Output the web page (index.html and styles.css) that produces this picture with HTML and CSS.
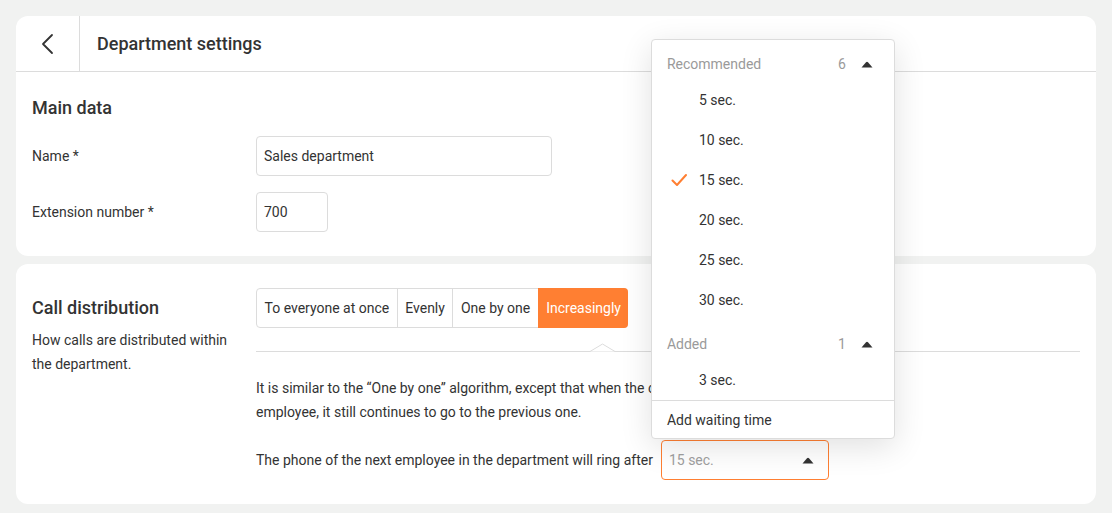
FILE: index.html
```html
<!DOCTYPE html>
<html lang="en">
<head>
<meta charset="utf-8">
<title>Department settings</title>
<link rel="stylesheet" href="styles.css">
</head>
<body>
<div class="card card-main">
  <div class="header">
    <div class="back">
      <svg width="24" height="24" viewBox="0 0 24 24"><path d="M16 3 L7 12 L16 21" fill="none" stroke="#333" stroke-width="1.8" stroke-linecap="round" stroke-linejoin="round"/></svg>
    </div>
    <div class="title">Department settings</div>
  </div>
  <div class="section">
    <h2 class="heading">Main data</h2>
    <div class="form">
      <div class="label">Name *</div>
      <div><div class="input input-name">Sales department</div></div>
      <div class="label">Extension number *</div>
      <div><div class="input input-ext">700</div></div>
    </div>
  </div>
</div>

<div class="card card-dist">
  <div class="dist-left">
    <h2 class="heading heading-dist">Call distribution</h2>
    <p class="desc">How calls are distributed within the department.</p>
  </div>
  <div class="dist-right">
    <div class="seg">
      <div class="seg-item">To everyone at once</div>
      <div class="seg-item">Evenly</div>
      <div class="seg-item">One by one</div>
      <div class="seg-item seg-active">Increasingly</div>
    </div>
    <div class="divider">
      <svg class="notch" width="25" height="9" viewBox="0 0 25 9"><polygon points="0,8.5 12.5,1 25,8.5" fill="#fff"/><polyline points="0,8.5 12.5,1 25,8.5" fill="none" stroke="#dcdcdc" stroke-width="1"/></svg>
    </div>
    <p class="explain">It is similar to the “One by one” algorithm, except that when the call passes to the next employee, it still continues to go to the previous one.</p>
    <div class="ring-row">
      <span>The phone of the next employee in the department will ring after</span>
      <div class="select-wrap">
        <div class="select">
          <span class="placeholder">15 sec.</span>
          <svg class="tri" width="12" height="7" viewBox="0 0 12 7"><path d="M0.5 6.5 L5 1.3 Q6 0.3 7 1.3 L11.5 6.5 Z" fill="#333"/></svg>
        </div>
        <div class="dropdown">
          <div class="group">
            <div class="group-head">
              <span class="group-name">Recommended</span>
              <span class="group-count">6</span>
              <svg class="tri" width="12" height="7" viewBox="0 0 12 7"><path d="M0.5 6.5 L5 1.3 Q6 0.3 7 1.3 L11.5 6.5 Z" fill="#333"/></svg>
            </div>
            <div class="opt">5 sec.</div>
            <div class="opt">10 sec.</div>
            <div class="opt opt-selected">
              <svg class="check" width="16" height="16" viewBox="0 0 16 16"><path d="M1.5 8.5 L6 13 L15 3" fill="none" stroke="#ff7f32" stroke-width="2" stroke-linecap="round" stroke-linejoin="round"/></svg>
              15 sec.
            </div>
            <div class="opt">20 sec.</div>
            <div class="opt">25 sec.</div>
            <div class="opt">30 sec.</div>
          </div>
          <div class="group group-second">
            <div class="group-head">
              <span class="group-name">Added</span>
              <span class="group-count">1</span>
              <svg class="tri" width="12" height="7" viewBox="0 0 12 7"><path d="M0.5 6.5 L5 1.3 Q6 0.3 7 1.3 L11.5 6.5 Z" fill="#333"/></svg>
            </div>
            <div class="opt">3 sec.</div>
          </div>
          <div class="dd-footer">Add waiting time</div>
        </div>
      </div>
    </div>
  </div>
</div>
</body>
</html>
```

FILE: styles.css
```css
* { box-sizing: border-box; }

body {
  margin: 0;
  padding: 16px;
  background: #f1f2f1;
  font-family: Roboto, "Liberation Sans", sans-serif;
  font-size: 14px;
  color: #333;
}

.card {
  background: #fff;
  border-radius: 12px;
  width: 1080px;
}

.card-main { height: 240px; }

.header {
  display: flex;
  height: 56px;
  border-bottom: 1px solid #dcdcdc;
}

.back {
  width: 64px;
  border-right: 1px solid #dcdcdc;
  display: flex;
  align-items: center;
  justify-content: center;
}

.title {
  display: flex;
  align-items: center;
  padding-left: 17px;
  font-size: 18px;
  font-weight: 500;
}

.section { padding: 25px 16px 0; }

.heading {
  margin: 0;
  font-size: 18px;
  font-weight: 500;
  line-height: 22px;
}

.form {
  margin-top: 17px;
  display: grid;
  grid-template-columns: 224px 1fr;
  row-gap: 16px;
  align-items: center;
}

.input {
  height: 40px;
  border: 1px solid #dcdcdc;
  border-radius: 4px;
  display: flex;
  align-items: center;
  padding: 0 7px;
}

.input-name { width: 296px; }
.input-ext { width: 72px; }

.card-dist {
  margin-top: 8px;
  height: 240px;
  display: flex;
  padding: 24px 16px;
}

.dist-left { width: 224px; }

.heading-dist {
  margin-top: 8px;
  line-height: 24px;
}

.desc {
  margin: 8px 0 0;
  line-height: 24px;
  width: 210px;
}

.dist-right { flex: 1; }

.seg {
  display: inline-flex;
  height: 40px;
  border: 1px solid #dcdcdc;
  border-radius: 4px;
}

.seg-item {
  display: flex;
  align-items: center;
  padding: 0 7.5px;
  border-left: 1px solid #dcdcdc;
}

.seg-item:first-child { border-left: none; }

.seg-active {
  background: #ff7f32;
  color: #fff;
  border-left-color: #ff7f32;
  margin: -1px -1px -1px 0;
  border-radius: 0 4px 4px 0;
}

.divider {
  position: relative;
  margin-top: 23px;
  border-bottom: 1px solid #dcdcdc;
}

.notch {
  position: absolute;
  left: 334px;
  top: -8px;
}

.explain {
  margin: 24px 0 0;
  width: 575px;
  line-height: 24px;
}

.ring-row {
  margin-top: 16px;
  display: flex;
  align-items: center;
  gap: 8px;
}

.select-wrap { position: relative; }

.select {
  width: 168px;
  height: 40px;
  border: 1px solid #ff7f32;
  border-radius: 4px;
  display: flex;
  align-items: center;
  justify-content: space-between;
  padding: 0 14px 0 7px;
}

.placeholder { color: #a0a0a0; }

.tri { display: block; }

.dropdown {
  position: absolute;
  left: -10px;
  bottom: calc(100% + 1px);
  width: 244px;
  background: #fff;
  border: 1px solid #dcdcdc;
  border-radius: 4px;
  box-shadow: 0 8px 32px rgba(0, 0, 0, 0.12);
  padding-top: 8px;
  z-index: 10;
}

.group-second { margin-top: 8px; }

.group-head {
  height: 32px;
  display: flex;
  align-items: center;
  padding: 0 21px 0 15px;
}

.group-name {
  flex: 1;
  color: #9a9a9a;
}

.group-count {
  color: #9a9a9a;
  margin-right: 15px;
}

.opt {
  position: relative;
  height: 40px;
  display: flex;
  align-items: center;
  padding-left: 47px;
}

.check {
  position: absolute;
  left: 19px;
  top: 12px;
}

.dd-footer {
  border-top: 1px solid #dcdcdc;
  height: 38px;
  display: flex;
  align-items: center;
  padding-left: 15px;
}
```
